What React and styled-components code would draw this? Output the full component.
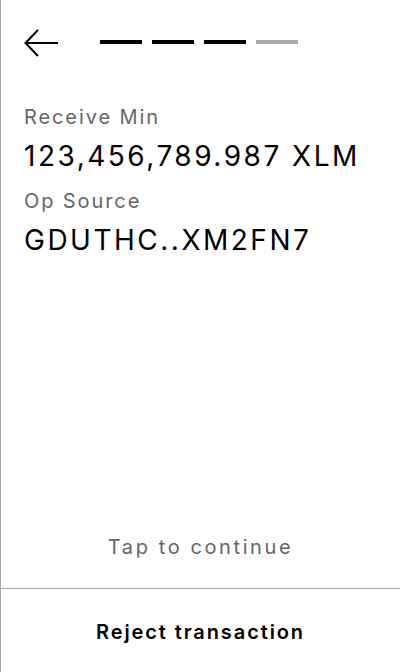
import React from "react";
import styled, { createGlobalStyle } from "styled-components";

const Global = createGlobalStyle`
  html, body { margin: 0; padding: 0; background: #fff; }
  body { font-family: Inter, "Noto Sans", sans-serif; }
  * { box-sizing: border-box; }
`;

const Screen = styled.div`
  height: 672px;
  width: 400px;
  border-left: 1px solid #a8a8a8;
  display: flex;
  flex-direction: column;
  color: #000;
`;

const Header = styled.div`
  display: flex;
  align-items: center;
  padding: 30px 0 0 23px;
  height: 56px;
`;

const BackButton = styled.button`
  border: none;
  background: none;
  padding: 0;
  width: 34px;
  height: 28px;
  display: flex;
  align-items: center;
  cursor: pointer;
`;

const Steps = styled.div`
  display: flex;
  gap: 10px;
  margin-left: 42px;
  margin-top: -2px;
`;

const Step = styled.div`
  width: 42px;
  height: 4px;
  background: ${(p) => (p.$done ? "#000" : "#aaaaaa")};
`;

const Content = styled.div`
  padding: 47px 23px 0;
  display: flex;
  flex-direction: column;
`;

const Label = styled.div`
  font-size: 20px;
  line-height: 28px;
  letter-spacing: 1.9px;
  color: #666;
`;

const Value = styled.div`
  font-size: 28px;
  line-height: 36px;
  margin-top: 7px;
  margin-bottom: 13px;
  letter-spacing: 2.5px;
`;

const Spacer = styled.div`
  flex: 1;
`;

const Hint = styled.div`
  text-align: center;
  font-size: 20px;
  line-height: 28px;
  letter-spacing: 2.6px;
  color: #666;
  padding-bottom: 27px;
`;

const Footer = styled.button`
  border: none;
  border-top: 1px solid #a8a8a8;
  background: none;
  height: 84px;
  width: 100%;
  font-family: inherit;
  font-size: 20px;
  font-weight: 600;
  letter-spacing: 1.9px;
  color: #000;
  padding: 2px 0 0;
  cursor: pointer;
`;

function ArrowLeft() {
  return (
    <svg width="34" height="28" viewBox="0 0 34 28" fill="none">
      <path d="M34 14H2" stroke="#000" strokeWidth="2" />
      <path d="M14 1L1.5 14L14 27" stroke="#000" strokeWidth="2" />
    </svg>
  );
}

export default function App() {
  return (
    <>
      <Global />
      <Screen>
        <Header>
          <BackButton aria-label="Back">
            <ArrowLeft />
          </BackButton>
          <Steps>
            <Step $done />
            <Step $done />
            <Step $done />
            <Step />
          </Steps>
        </Header>
        <Content>
          <Label>Receive Min</Label>
          <Value>123,456,789.987 XLM</Value>
          <Label>Op Source</Label>
          <Value>GDUTHC..XM2FN7</Value>
        </Content>
        <Spacer />
        <Hint>Tap to continue</Hint>
        <Footer>Reject transaction</Footer>
      </Screen>
    </>
  );
}
